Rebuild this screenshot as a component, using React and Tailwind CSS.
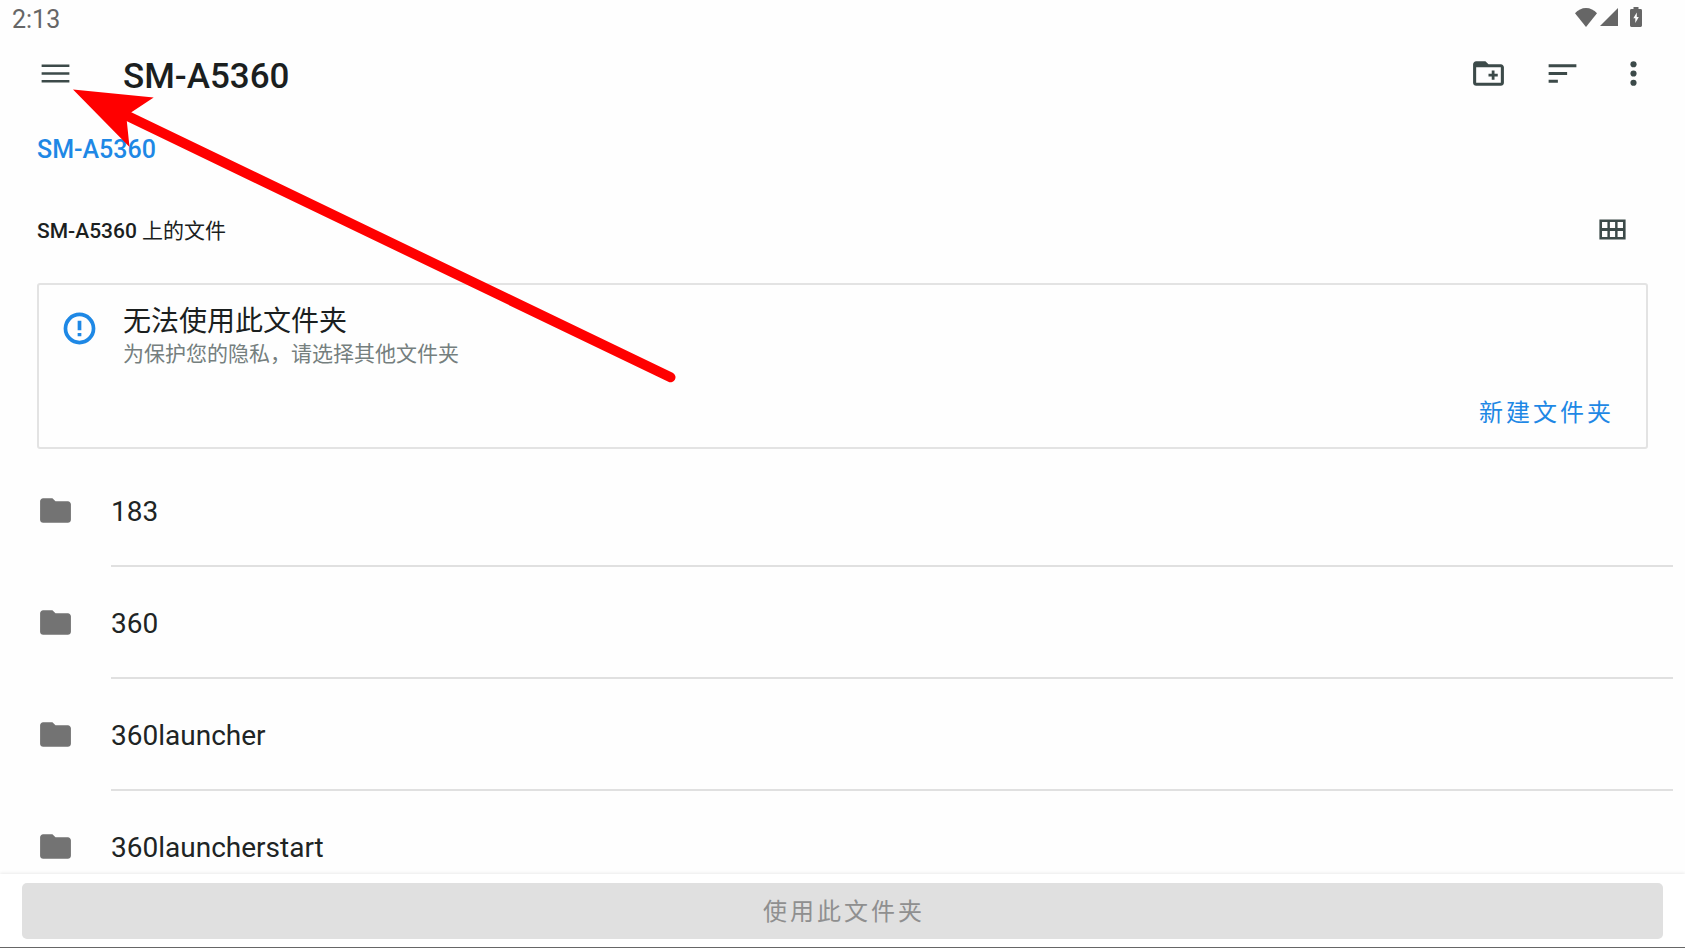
const FOLDERS = ["183", "360", "360launcher", "360launcherstart"];

function Icon({ children, className = "" }) {
  return (
    <svg viewBox="0 0 24 24" className={`block size-[37px] shrink-0 ${className}`} fill="currentColor" aria-hidden="true">
      {children}
    </svg>
  );
}

function StatusBar() {
  return (
    <div className="flex h-[38px] shrink-0 items-center justify-between pl-3 pr-[43px] text-[#666666]">
      <span className="pt-[2px] text-[25px]">2:13</span>
      <div className="flex items-center pb-1">
        <svg viewBox="0 0 22 19" className="mr-[3px] h-[19px] w-[22px]" fill="currentColor" aria-hidden="true">
          <path d="M11 19 0 5.2C3 2 6.8 0 11 0s8 2 11 5.2z" />
        </svg>
        <svg viewBox="0 0 18 18" className="mr-3 size-[18px]" fill="currentColor" aria-hidden="true">
          <path d="M18 0v18H0z" />
        </svg>
        <svg viewBox="0 0 12 20" className="h-5 w-3" fill="currentColor" aria-hidden="true">
          <path
            fillRule="evenodd"
            d="M3.5 0h5v2H10.600a1.400 1.400 0 0 1 1.400 1.400v15.200a1.400 1.400 0 0 1-1.400 1.400H1.400A1.400 1.400 0 0 1 0 18.600V3.400A1.400 1.400 0 0 1 1.400 2H3.500zM6.800 5.500 3.300 11.200h2v4.800L8.800 10H6.800z"
          />
        </svg>
      </div>
    </div>
  );
}

function Toolbar() {
  return (
    <header className="flex h-[70px] shrink-0 items-center pl-[37px] pr-[33px] text-[#3c4a49]">
      <button type="button" aria-label="菜单">
        <Icon>
          <path d="M3 6.200h18v1.600H3zM3 11.200h18v1.600H3zM3 16.200h18v1.600H3z" />
        </Icon>
      </button>
      <h1 className="ml-[49px] grow pt-[7px] text-[35px] leading-10 font-medium text-[#1b1f1f]">SM-A5360</h1>
      <button type="button" aria-label="新建文件夹" className="mr-[37px]">
        <Icon>
          <path d="M20 6h-8l-2-2H4c-1.100 0-2 .9-2 2v12c0 1.100.9 2 2 2h16c1.100 0 2-.9 2-2V8c0-1.100-.9-2-2-2zm0 12H4V8h16v10zM14.100 16h1.800v-2.100H18v-1.800h-2.100V10h-1.800v2.100H12v1.800h2.100z" />
        </Icon>
      </button>
      <button type="button" aria-label="排序" className="mr-[34px]">
        <Icon>
          <path d="M3 18h6v-2H3v2zM3 6v2h18V6H3zm0 7h12v-2H3v2z" />
        </Icon>
      </button>
      <button type="button" aria-label="更多选项">
        <Icon>
          <circle cx="12" cy="6" r="2" />
          <circle cx="12" cy="12" r="2" />
          <circle cx="12" cy="18" r="2" />
        </Icon>
      </button>
    </header>
  );
}

function NoticeCard() {
  return (
    <section className="mx-[37px] mt-[14px] flex h-[166px] shrink-0 flex-col justify-between rounded-[3px] border-2 border-[#e3e3e3] pb-[14px] pl-[22px] pr-8 pt-[21px]">
      <div className="flex items-start gap-[25px]">
        <Icon className="mt-1 text-[#1e88e5]">
          <path
            fillRule="evenodd"
            d="M12 1.700a10.300 10.300 0 1 0 0 20.600 10.300 10.300 0 0 0 0-20.600zm0 2.400a7.900 7.900 0 1 1 0 15.800 7.900 7.900 0 0 1 0-15.800zM10.800 7h2.400v6.200h-2.400zM10.800 14.900h2.400v2.200h-2.400z"
          />
        </Icon>
        <div>
          <h3 className="text-[28px] leading-8 text-[#1b1f1f]">无法使用此文件夹</h3>
          <p className="text-[21px] leading-8 text-[#757f7e]">为保护您的隐私，请选择其他文件夹</p>
        </div>
      </div>
      <button type="button" className="self-end text-2xl leading-10 tracking-[3px] text-[#1e88e5]">
        新建文件夹
      </button>
    </section>
  );
}

function FolderRow({ name }) {
  return (
    <li className="flex h-28 shrink-0 items-stretch pl-[37px] pr-3">
      <div className="flex w-[74px] shrink-0 items-center pb-[2px]">
        <Icon className="text-[#737373]">
          <path d="M10 4H4c-1.100 0-1.990.9-1.990 2L2 18c0 1.100.9 2 2 2h16c1.100 0 2-.9 2-2V8c0-1.100-.9-2-2-2h-8l-2-2z" />
        </Icon>
      </div>
      <a href="#" className="flex grow items-center border-b-2 border-[#e0e0e0] pt-[3px] text-[28px] text-[#202424]">
        {name}
      </a>
    </li>
  );
}

export default function App() {
  return (
    <div
      lang="zh-CN"
      className="relative flex h-screen flex-col overflow-hidden bg-[#fefefe] font-['Roboto','Noto_Sans_CJK_SC',sans-serif]"
    >
      <StatusBar />
      <Toolbar />
      <nav className="flex h-[81px] shrink-0 items-center px-[37px] pt-[2px]">
        <a href="#" className="text-[25px] font-medium text-[#1e88e5]">
          SM-A5360
        </a>
      </nav>
      <div className="flex h-20 shrink-0 items-center justify-between pl-[37px] pr-[54px]">
        <h2 className="pt-1 text-[21px] leading-7 text-[#1b1f1f]">
          <span className="font-medium">SM-A5360</span> 上的文件
        </h2>
        <button type="button" aria-label="网格视图" className="text-[#3c4a49]">
          <Icon>
            <path
              fillRule="evenodd"
              d="M3.500 5.500h17v13h-17zM5.200 7.200v3.900h3.500V7.200zM10.300 7.200v3.900h3.400V7.200zM15.300 7.200v3.900h3.500V7.200zM5.200 12.900v3.900h3.500v-3.900zM10.300 12.900v3.900h3.400v-3.900zM15.300 12.900v3.900h3.500v-3.900z"
            />
          </Icon>
        </button>
      </div>
      <NoticeCard />
      <ul className="mt-[6px] flex min-h-0 grow flex-col overflow-hidden">
        {FOLDERS.map((name) => (
          <FolderRow key={name} name={name} />
        ))}
      </ul>
      <footer className="z-10 shrink-0 border-b border-[#666666] bg-white px-[22px] pb-2 pt-[9px] shadow-[0_-1px_3px_rgba(0,0,0,0.08)]">
        <button
          type="button"
          disabled
          className="block h-14 w-full rounded-[5px] bg-[#e0e0e0] pl-[3px] pt-[2px] text-2xl tracking-[3px] text-[#8f8f8f]"
        >
          使用此文件夹
        </button>
      </footer>

      <svg
        viewBox="0 0 680 400"
        className="pointer-events-none absolute left-0 top-0 z-20 h-[400px] w-[680px]"
        aria-hidden="true"
      >
        <path d="M126 115.300 670.500 377.300" stroke="#ff0000" strokeWidth="10" strokeLinecap="round" />
        <path d="M73 89.500 153.700 97.500 131 112.500 126.800 121 129.500 147z" fill="#ff0000" />
      </svg>
    </div>
  );
}
